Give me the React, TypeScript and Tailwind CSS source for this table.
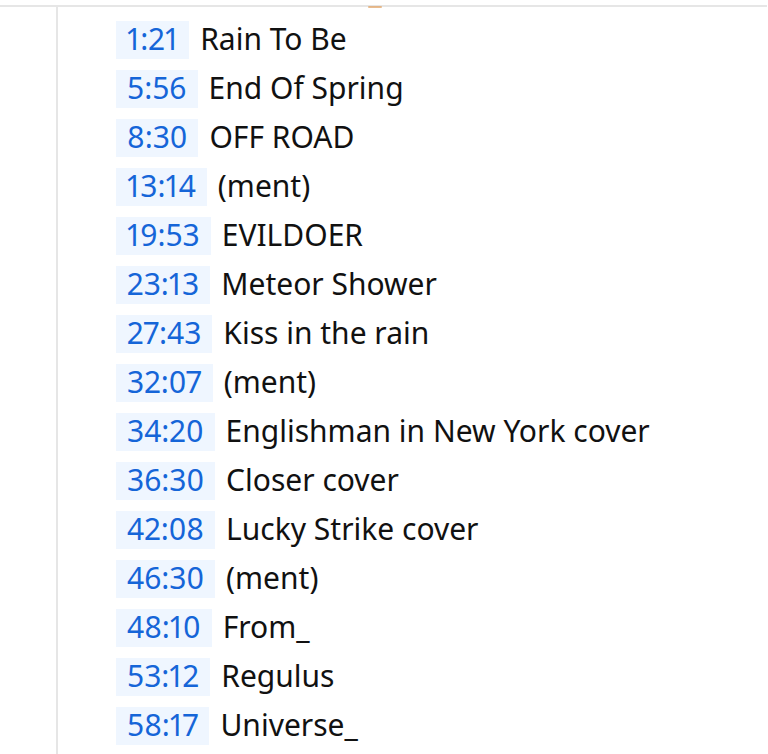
import React from "react";

const rows: [string, string][] = [
  ["1:21", "Rain To Be"],
  ["5:56", "End Of Spring"],
  ["8:30", "OFF ROAD"],
  ["13:14", "(ment)"],
  ["19:53", "EVILDOER"],
  ["23:13", "Meteor Shower"],
  ["27:43", "Kiss in the rain"],
  ["32:07", "(ment)"],
  ["34:20", "Englishman in New York cover"],
  ["36:30", "Closer cover"],
  ["42:08", "Lucky Strike cover"],
  ["46:30", "(ment)"],
  ["48:10", "From_"],
  ["53:12", "Regulus"],
  ["58:17", "Universe_"],
];

export default function App() {
  return (
    <div
      className="relative w-[768px] h-[754px] overflow-hidden bg-white"
      style={{ fontFamily: '"Noto Sans", "Open Sans", sans-serif' }}
    >
      <div className="h-[5px]" />
      <div className="relative h-[2px] w-[767px] bg-[#e6e6e6]">
        <div className="absolute left-[368px] top-[1px] h-[2px] w-[14px] rounded-full bg-[#e0a060] opacity-70" />
      </div>
      <div className="flex h-[747px]">
        <div className="w-[56px] shrink-0" />
        <div className="w-[2px] shrink-0 bg-[#e6e6e6]" />
        <div className="flex flex-col gap-[11px] pl-[58px] pt-[14px]">
          {rows.map(([t, title], i) => (
            <div key={i} className="flex items-start h-[38px] text-[30px] leading-[35px] text-[#111] whitespace-nowrap">
              <span className="bg-[#eff6ff] text-[#1565d8] px-[11px] h-[38px] proportional-nums">{t}</span>
              <span className="ml-[11px]">{title}</span>
            </div>
          ))}
        </div>
      </div>
    </div>
  );
}
